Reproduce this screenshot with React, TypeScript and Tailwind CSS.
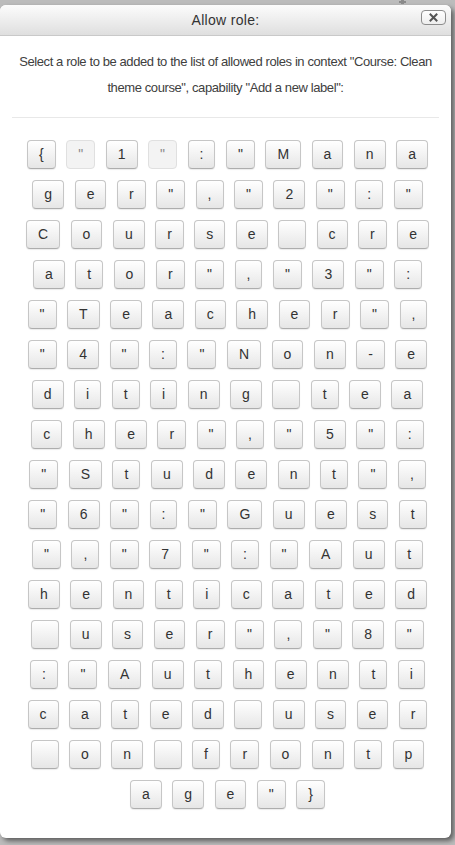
import React from "react";

const TEXT =
  '{"1":"Manager","2":"Course creator","3":"Teacher","4":"Non-editing teacher","5":"Student","6":"Guest","7":"Authenticated user","8":"Authenticated user on frontpage"}';

function chunk(chars: string[], n: number): string[][] {
  const out: string[][] = [];
  for (let i = 0; i < chars.length; i += n) out.push(chars.slice(i, i + n));
  return out;
}

export default function App() {
  const chars = Array.from(TEXT).map((c) => (c === " " ? "\u00a0" : c));
  const rows = chunk(chars, 10);
  return (
    <div
      className="relative w-[455px] h-[845px] overflow-hidden bg-[#bcbcbc] pt-[5px]"
      style={{ fontFamily: '"Liberation Sans", Arial, sans-serif' }}
    >
      <div className="absolute left-[399px] top-0 w-[7px] h-[4px]">
        <div className="absolute left-[2px] top-0 w-[3px] h-[4px] bg-[#8a8a8a]" />
        <div className="absolute left-0 top-[1px] w-[7px] h-[2px] bg-[#8a8a8a]" />
      </div>
      <div className="w-[451px] h-[833px] bg-white rounded-[6px] shadow-[3px_3px_5px_rgba(0,0,0,0.5)] flex flex-col">
        <div className="relative h-[31px] shrink-0 rounded-t-[6px] border-b border-[#c9c9c9] bg-gradient-to-b from-[#fcfcfc] to-[#dfdfdf] flex items-center justify-center">
          <span className="text-[14px] tracking-[0.3px] text-[#333]">Allow role:</span>
          <div className="absolute right-[5px] top-[5px] w-[25px] h-[15px] rounded-[4px] border border-[#8d8d8d] bg-gradient-to-b from-white to-[#eeeeee] flex items-center justify-center">
            <svg width="9" height="9" viewBox="0 0 9 9">
              <path d="M1.5 1.5 L7.5 7.5 M7.5 1.5 L1.5 7.5" stroke="#555" strokeWidth="2" strokeLinecap="square" />
            </svg>
          </div>
        </div>
        <div className="px-[12px] pt-[13px]">
          <p className="text-center text-[13px] tracking-[-0.4px] leading-[25.5px] text-[#404040]">
            Select a role to be added to the list of allowed roles in context "Course: Clean theme course", capability "Add a new label":
          </p>
          <div className="mt-[17px] h-px bg-[#e8e8e8]" />
        </div>
        <div className="pt-[22px] pl-[4px] flex flex-col gap-[11px]">
          {rows.map((row, ri) => (
            <div key={ri} className="flex justify-center gap-[10.5px]">
              {row.map((c, ci) => {
                const light = ri === 0 && (ci === 1 || ci === 3);
                return light ? (
                  <div
                    key={ci}
                    className="h-[29px] px-[11px] rounded-[4px] border border-[#e0e0e0] bg-[#f3f3f3] flex items-center justify-center text-[14px] text-[#8a8a8a]"
                  >
                    {c}
                  </div>
                ) : (
                  <div
                    key={ci}
                    className="h-[29px] px-[11px] rounded-[4px] border border-[#c6c6c6] border-b-[#adadad] bg-gradient-to-b from-white to-[#e6e6e6] shadow-[0_1px_1px_rgba(0,0,0,0.08)] flex items-center justify-center text-[14px] text-[#333]"
                  >
                    {c}
                  </div>
                );
              })}
            </div>
          ))}
        </div>
      </div>
    </div>
  );
}
